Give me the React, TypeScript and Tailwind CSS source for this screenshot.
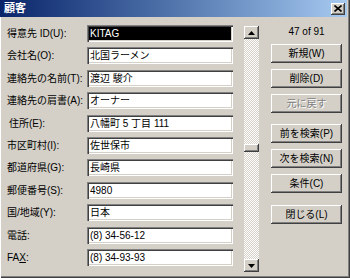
import React from 'react';

const fields: { label: React.ReactNode; value: string; indent?: boolean }[] = [
  { label: '得意先 ID(U):', value: 'KITAG' },
  { label: '会社名(O):', value: '北国ラーメン' },
  { label: '連絡先の名前(T):', value: '渡辺 駿介' },
  { label: '連絡先の肩書(A):', value: 'オーナー' },
  { label: '住所(E):', value: '八幡町 5 丁目 111', indent: true },
  { label: '市区町村(I):', value: '佐世保市' },
  { label: '都道府県(G):', value: '長崎県' },
  { label: '郵便番号(S):', value: '4980' },
  { label: '国/地域(Y):', value: '日本' },
  { label: '電話:', value: '(8) 34-56-12' },
  { label: <>FA<span className="underline">X</span>:</>, value: '(8) 34-93-93' },
];

const buttons = [
  { text: '新規(W)', mt: 'mt-[5px]' },
  { text: '削除(D)', mt: 'mt-[6px]' },
  { text: '元に戻す', mt: 'mt-[6px]', disabled: true },
  { text: '前を検索(P)', mt: 'mt-[11px]' },
  { text: '次を検索(N)', mt: 'mt-[6px]' },
  { text: '条件(C)', mt: 'mt-[6px]' },
  { text: '閉じる(L)', mt: 'mt-[12px]' },
];

const raised =
  'shadow-[inset_-1px_-1px_0_#404040,inset_1px_1px_0_#fff,inset_-2px_-2px_0_#808080,inset_2px_2px_0_#d4d0c8]';
const sunken =
  'shadow-[inset_1px_1px_0_#808080,inset_2px_2px_0_#404040,inset_-1px_-1px_0_#fff,inset_-2px_-2px_0_#d4d0c8]';

function Arrow({ down }: { down?: boolean }) {
  return (
    <div className={`h-[13px] w-[15px] bg-[#d4d0c8] flex items-center justify-center ${raised}`}>
      <svg width="7" height="4" viewBox="0 0 7 4">
        {down ? <polygon points="0,0 7,0 3.5,4" fill="#000" /> : <polygon points="3.5,0 7,4 0,4" fill="#000" />}
      </svg>
    </div>
  );
}

export default function App() {
  return (
    <div className="w-[350px] h-[278px] bg-[#d4d0c8] flex flex-col font-['Liberation_Sans','Noto_Sans_CJK_JP',sans-serif] text-[10px] text-black shadow-[inset_1px_0_0_#fff,inset_-1px_-1px_0_#404040,inset_-2px_-2px_0_#808080] overflow-hidden">
      {/* Title bar */}
      <div className="h-[17px] mr-[3px] bg-linear-to-r from-[#0a246a] to-[#a6caf0] flex items-center pl-[4px] pr-[2px]">
        <span className="text-white font-bold text-[11px] leading-none">顧客</span>
        <div className={`ml-auto h-[12px] w-[14px] bg-[#d4d0c8] flex items-center justify-center ${raised}`}>
          <svg width="8" height="7" viewBox="0 0 8 7">
            <path d="M0.5 0.5 L7.5 6.5 M7.5 0.5 L0.5 6.5" stroke="#000" strokeWidth="1.6" />
          </svg>
        </div>
      </div>

      <div className="flex flex-1 pt-[8px]">
        {/* Form */}
        <div className="flex flex-col gap-[5.4px] pl-[7px]">
          {fields.map((f, i) => (
            <div key={i} className="flex items-center h-[17px]">
              <div className={`w-[80px] leading-[17px] whitespace-nowrap ${f.indent ? 'pl-[2px]' : ''}`}>{f.label}</div>
              <div
                className={`w-[146px] h-[17px] pl-[3px] leading-[17px] whitespace-nowrap ${sunken} ${
                  i === 0 ? 'bg-black text-white' : 'bg-white'
                }`}
              >
                {f.value}
              </div>
            </div>
          ))}
        </div>

        {/* Scrollbar */}
        <div className="ml-[11px] mt-[1px] w-[15px] h-[246px] flex flex-col bg-[repeating-conic-gradient(#d4d0c8_0_25%,#fff_0_50%)] bg-[length:2px_2px]">
          <Arrow />
          <div className="flex-1 flex flex-col">
            <div className="h-[105px]" />
            <div className={`h-[8px] w-[15px] bg-[#d4d0c8] ${raised}`} />
          </div>
          <Arrow down />
        </div>

        {/* Buttons */}
        <div className="ml-[12px] w-[71px] flex flex-col">
          <div className="h-[14px] leading-[14px] text-center">47 of 91</div>
          {buttons.map((b) => (
            <div
              key={b.text}
              className={`${b.mt} h-[19px] w-[71px] flex items-center justify-center bg-[#d4d0c8] ${raised} ${
                b.disabled ? 'text-[#808080] [text-shadow:1px_1px_0_#fff]' : ''
              }`}
            >
              {b.text}
            </div>
          ))}
        </div>
      </div>
    </div>
  );
}
